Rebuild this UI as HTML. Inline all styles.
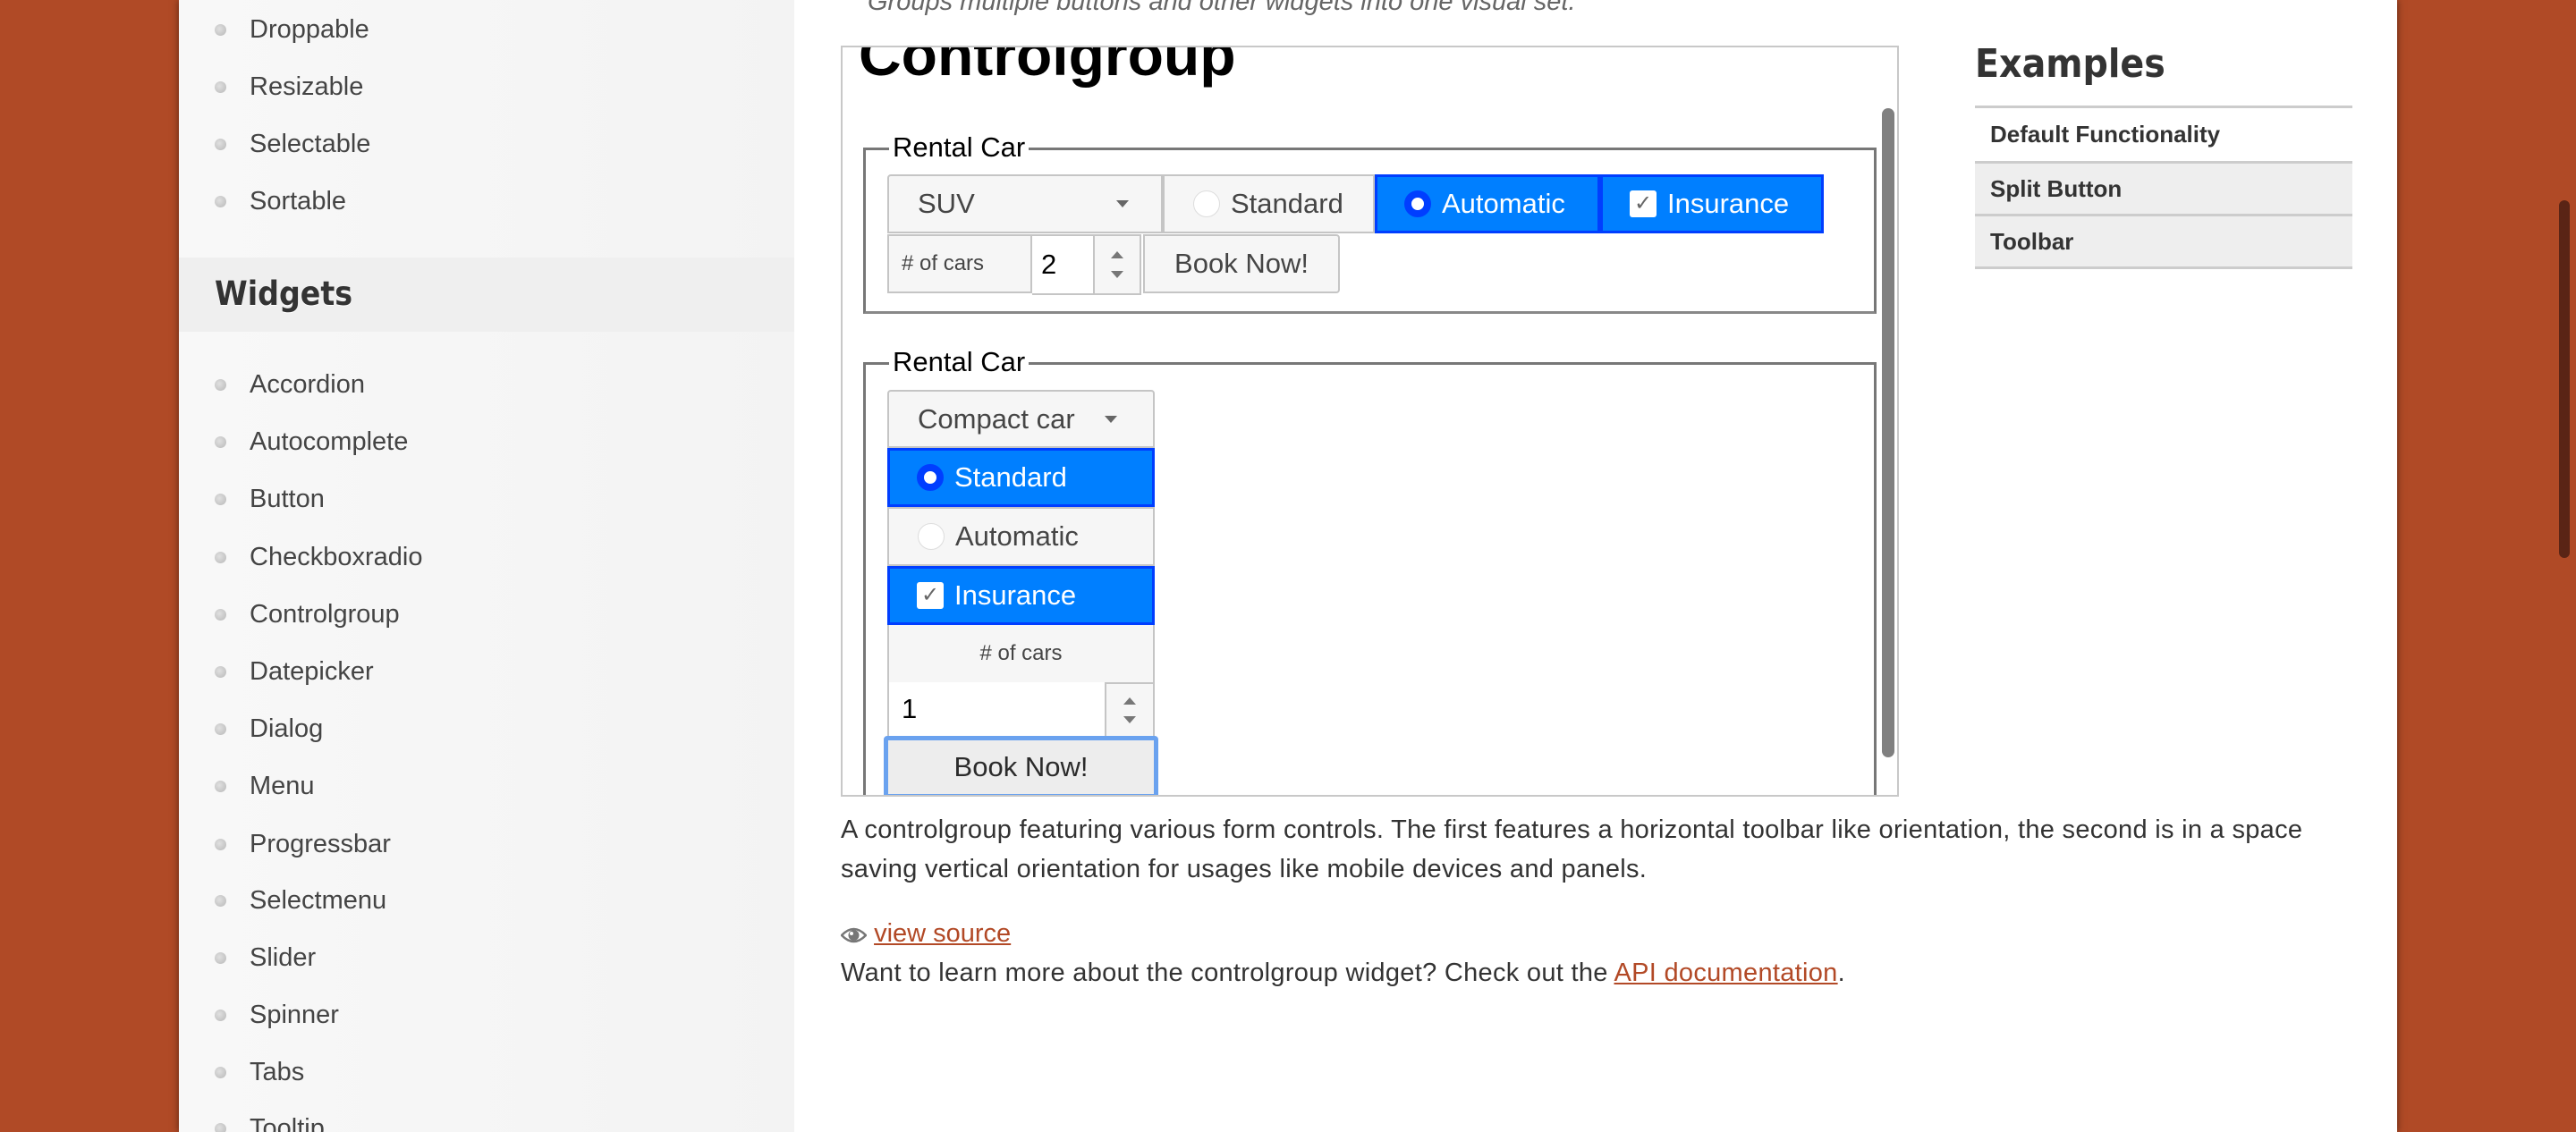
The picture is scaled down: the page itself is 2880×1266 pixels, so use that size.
<!DOCTYPE html>
<html><head><meta charset="utf-8"><style>
*{margin:0;padding:0;box-sizing:border-box}
html,body{width:2880px;height:1266px;overflow:hidden}
body{background:#b04a26;font-family:"Liberation Sans",Arial,sans-serif}
#wrap{position:relative;width:2880px;height:1266px;overflow:hidden;background:#b04a26}
.a{position:absolute}
#page{left:200px;top:0;width:2480px;height:1266px;background:#fff;box-shadow:0 0 8px rgba(0,0,0,.5)}
#side{left:200px;top:0;width:688px;height:1266px;background:linear-gradient(90deg,#f8f8f8,#f3f3f3)}
.li{left:279px;height:40px;line-height:40px;font-size:29px;color:#444}
.bul{left:240px;width:13px;height:13px;border-radius:50%;background:radial-gradient(circle at 40% 40%,#e0e0e0,#b8b8b8)}
.btn{background:#f6f6f6;border:2px solid #c5c5c5;color:#454545;font-size:31px;display:flex;align-items:center}
.act{background:#007fff;border:3px solid #003eff;color:#fff}
.radio{width:30px;height:30px;border-radius:50%;background:#fff;border:1px solid #ddd;margin-right:12px}
.radio.on{border:8px solid #003eff;background:#fff}
.chk{width:30px;height:30px;background:#fff;border-radius:3px;margin-right:12px;color:#666;font-size:24px;text-align:center;line-height:30px}
.tri{width:0;height:0;border-left:7px solid transparent;border-right:7px solid transparent;border-top:8px solid #666}
.up{width:0;height:0;border-left:7px solid transparent;border-right:7px solid transparent;border-bottom:8px solid #777}
.dn{width:0;height:0;border-left:7px solid transparent;border-right:7px solid transparent;border-top:8px solid #777}
.ex{left:2208px;width:422px;font-size:26px;font-weight:bold;color:#333;padding-left:17px;border-bottom:3px solid #ccc;display:flex;align-items:center}
p.t{font-size:29px;color:#333}
</style></head><body><div id="wrap">
<div class="a" id="page"></div>
<div class="a" id="side"></div>

<div class="a bul" style="top:27px"></div><div class="a li" style="top:13px">Droppable</div>
<div class="a bul" style="top:91px"></div><div class="a li" style="top:77px">Resizable</div>
<div class="a bul" style="top:155px"></div><div class="a li" style="top:141px">Selectable</div>
<div class="a bul" style="top:219px"></div><div class="a li" style="top:205px">Sortable</div>

<div class="a" style="left:200px;top:288px;width:688px;height:83px;background:#efefef"></div>
<div class="a" style="left:240px;top:307px;font-size:37px;font-weight:bold;color:#333;font-family:'DejaVu Sans Condensed','Liberation Sans',sans-serif;text-shadow:0 1px 0 #fff">Widgets</div>

<div class="a bul" style="top:424px"></div><div class="a li" style="top:410px">Accordion</div>
<div class="a bul" style="top:488px"></div><div class="a li" style="top:474px">Autocomplete</div>
<div class="a bul" style="top:552px"></div><div class="a li" style="top:538px">Button</div>
<div class="a bul" style="top:617px"></div><div class="a li" style="top:603px">Checkboxradio</div>
<div class="a bul" style="top:681px"></div><div class="a li" style="top:667px">Controlgroup</div>
<div class="a bul" style="top:745px"></div><div class="a li" style="top:731px">Datepicker</div>
<div class="a bul" style="top:809px"></div><div class="a li" style="top:795px">Dialog</div>
<div class="a bul" style="top:873px"></div><div class="a li" style="top:859px">Menu</div>
<div class="a bul" style="top:938px"></div><div class="a li" style="top:924px">Progressbar</div>
<div class="a bul" style="top:1001px"></div><div class="a li" style="top:987px">Selectmenu</div>
<div class="a bul" style="top:1065px"></div><div class="a li" style="top:1051px">Slider</div>
<div class="a bul" style="top:1129px"></div><div class="a li" style="top:1115px">Spinner</div>
<div class="a bul" style="top:1193px"></div><div class="a li" style="top:1179px">Tabs</div>
<div class="a bul" style="top:1256px"></div><div class="a li" style="top:1242px">Tooltip</div>

<div class="a" style="left:970px;top:-14px;font-size:29px;font-style:italic;color:#666">Groups multiple buttons and other widgets into one visual set.</div>

<!-- iframe -->
<div class="a" style="left:940px;top:51px;width:1183px;height:840px;border:2px solid #c8c8c8;overflow:hidden;background:#fff">
 <div class="a" style="left:18px;top:-30px;font-size:66px;font-weight:bold;color:#000">Controlgroup</div>
 <div class="a" style="left:1162px;top:68px;width:14px;height:726px;border-radius:7px;background:#808080"></div>
 <div class="a" style="left:23px;top:112px;width:1133px;height:186px;border:3px solid #777;border-bottom-color:#888"></div>
 <div class="a" style="left:52px;top:92px;background:#fff;padding:0 4px;font-size:31px;color:#000;line-height:40px">Rental Car</div>
 <div class="a btn" style="left:50px;top:142px;width:308px;height:66px;padding-left:32px;border-radius:4px 0 0 0">SUV<div class="tri" style="margin-left:auto;margin-right:36px"></div></div>
 <div class="a btn" style="left:358px;top:142px;width:237px;height:66px;padding-left:32px"><div class="radio"></div>Standard</div>
 <div class="a btn act" style="left:595px;top:142px;width:252px;height:66px;padding-left:30px"><div class="radio on"></div>Automatic</div>
 <div class="a btn act" style="left:847px;top:142px;width:250px;height:66px;padding-left:30px"><div class="chk">✓</div>Insurance</div>
 <div class="a btn" style="left:50px;top:209px;width:162px;height:66px;padding-left:14px;font-size:24px">#&nbsp;of cars</div>
 <div class="a" style="left:212px;top:209px;width:68px;height:68px;background:#fff;border-top:2px solid #c5c5c5;border-bottom:2px solid #c5c5c5;font-size:31px;line-height:64px;padding-left:10px">2</div>
 <div class="a" style="left:280px;top:209px;width:54px;height:68px;background:#f6f6f6;border:2px solid #c5c5c5;display:flex;flex-direction:column;align-items:center;justify-content:space-around;padding:10px 0"><div class="up"></div><div class="dn"></div></div>
 <div class="a btn" style="left:336px;top:209px;width:220px;height:66px;justify-content:center;border-radius:0 4px 4px 0">Book Now!</div>
 <div class="a" style="left:23px;top:352px;width:1133px;height:600px;border:3px solid #777"></div>
 <div class="a" style="left:52px;top:332px;background:#fff;padding:0 4px;font-size:31px;color:#000;line-height:40px">Rental Car</div>
 <div class="a btn" style="left:50px;top:383px;width:299px;height:65px;padding-left:32px;border-radius:4px 4px 0 0">Compact car<div class="tri" style="margin-left:auto;margin-right:40px"></div></div>
 <div class="a btn act" style="left:50px;top:448px;width:299px;height:66px;padding-left:30px"><div class="radio on"></div>Standard</div>
 <div class="a btn" style="left:50px;top:514px;width:299px;height:66px;padding-left:32px"><div class="radio"></div>Automatic</div>
 <div class="a btn act" style="left:50px;top:580px;width:299px;height:66px;padding-left:30px"><div class="chk">✓</div>Insurance</div>
 <div class="a btn" style="left:50px;top:646px;width:299px;height:64px;justify-content:center;font-size:24px;border-top:0;border-bottom:0">#&nbsp;of cars</div>
 <div class="a" style="left:50px;top:710px;width:243px;height:60px;background:#fff;border-left:2px solid #c5c5c5;font-size:31px;line-height:60px;padding-left:14px">1</div>
 <div class="a" style="left:293px;top:710px;width:56px;height:62px;background:#f6f6f6;border:2px solid #c5c5c5;display:flex;flex-direction:column;align-items:center;justify-content:space-around;padding:8px 0"><div class="up"></div><div class="dn"></div></div>
 <div class="a btn" style="left:46px;top:770px;width:307px;height:70px;justify-content:center;background:#ededed;color:#2b2b2b;border:5px solid #6aa2ef;border-radius:4px">Book Now!</div>
</div>

<p class="a t" style="left:940px;top:906px;width:1690px;line-height:44px;letter-spacing:0.3px">A controlgroup featuring various form controls. The first features a horizontal toolbar like orientation, the second is in a space saving vertical orientation for usages like mobile devices and panels.</p>
<div class="a" style="left:940px;top:1024px;font-size:29px;line-height:40px;color:#b24926"><span style="display:inline-block;vertical-align:-3px;width:29px;height:20px;position:relative"><svg width="29" height="20" viewBox="0 0 29 20"><path d="M1 10 Q14.5 -4 28 10 Q14.5 24 1 10Z" fill="none" stroke="#777" stroke-width="2.5"/><circle cx="14.5" cy="10" r="6" fill="#777"/><circle cx="12" cy="8" r="2" fill="#fff"/></svg></span> <u>view source</u></div>
<p class="a t" style="left:940px;top:1068px;line-height:40px;letter-spacing:0.3px">Want to learn more about the controlgroup widget? Check out the <u style="color:#b24926">API documentation</u>.</p>

<div class="a" style="left:2208px;top:46px;font-size:44px;font-weight:bold;color:#333;font-family:'DejaVu Sans Condensed','Liberation Sans',sans-serif">Examples</div>
<div class="a" style="left:2208px;top:118px;width:422px;height:3px;background:#ccc"></div>
<div class="a ex" style="top:121px;height:62px;background:#fff">Default Functionality</div>
<div class="a ex" style="top:183px;height:59px;background:#eee">Split Button</div>
<div class="a ex" style="top:242px;height:59px;background:#eee">Toolbar</div>

<div class="a" style="left:2861px;top:224px;width:12px;height:400px;border-radius:6px;background:#5a2415"></div>
</div></body></html>
